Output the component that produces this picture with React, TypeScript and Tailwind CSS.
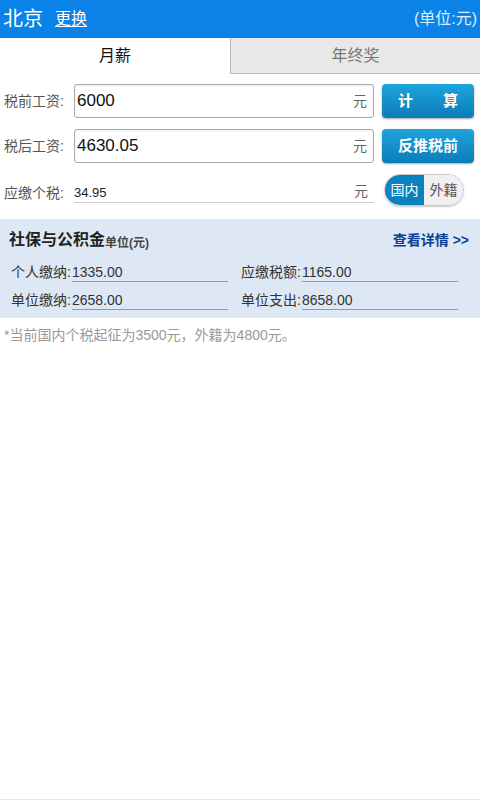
import React, { useState } from 'react';

const font = { fontFamily: '"Liberation Sans", "Noto Sans CJK SC", sans-serif' };

const InputRow: React.FC<{ label: string; value: string; button: React.ReactNode }> = ({ label, value, button }) => (
  <div className="flex items-center h-[34px]">
    <div className="w-[74px] pl-[4px] text-[14px] text-[#555]">{label}</div>
    <div className="flex h-[34px] w-[300px] items-center rounded-[3px] border border-[#a9a9a9] bg-white pl-[2px] pr-[6px] shadow-[inset_0_1px_2px_rgba(0,0,0,0.08)]">
      <span className="flex-1 text-[17px] text-[#111]">{value}</span>
      <span className="text-[14px] text-[#666]">元</span>
    </div>
    <button className="ml-[8px] h-[34px] w-[92px] rounded-[4px] bg-gradient-to-b from-[#1ea4dc] to-[#0a7db8] text-[15px] font-bold text-white shadow-[0_1px_2px_rgba(0,0,0,0.35)]">
      {button}
    </button>
  </div>
);

const Field: React.FC<{ label: string; value: string }> = ({ label, value }) => (
  <div className="flex items-end">
    <span className="text-[14px] leading-[20px] text-[#333]">{label}</span>
    <span className="ml-[1px] w-[156px] border-b border-[#999] text-[14px] leading-[18px] text-[#333]">{value}</span>
  </div>
);

export default function App() {
  const [tab, setTab] = useState(0);
  const [local, setLocal] = useState(true);

  return (
    <div className="flex h-[800px] w-[480px] flex-col border-b border-[#e8e8e2] bg-white" style={font}>
      <div className="flex h-[38px] items-center bg-[#0a82e8] px-[3px] text-white">
        <span className="text-[20px]">北京</span>
        <span className="ml-[12px] text-[16px] underline underline-offset-2">更换</span>
        <span className="ml-auto text-[16px] text-[#dcefff]">(单位:元)</span>
      </div>

      <div className="flex h-[36px]">
        <button onClick={() => setTab(0)} className={tab === 0 ? 'w-[230px] bg-white text-[16px] text-[#111]' : 'w-[230px] bg-white text-[16px] text-[#111]'}>
          月薪
        </button>
        <button
          onClick={() => setTab(1)}
          className="flex-1 border-b border-l border-[#b8b8b8] bg-[#e8e8e8] text-[16px] text-[#777]"
        >
          年终奖
        </button>
      </div>

      <div className="flex flex-col gap-[11px] pt-[10px]">
        <InputRow
          label="税前工资:"
          value="6000"
          button={
            <span className="flex justify-between px-[16px]">
              <span>计</span>
              <span>算</span>
            </span>
          }
        />
        <InputRow label="税后工资:" value="4630.05" button="反推税前" />
        <div className="flex h-[32px] items-center">
          <div className="w-[74px] pl-[4px] pt-[6px] text-[14px] text-[#555]">应缴个税:</div>
          <div className="flex w-[300px] items-end border-b border-[#ccc] pr-[6px] pt-[4px]">
            <span className="flex-1 text-[13px] text-[#222]">34.95</span>
            <span className="text-[14px] text-[#666]">元</span>
          </div>
          <div className="ml-[10px] flex h-[32px] w-[80px] overflow-hidden rounded-full border border-[#c8c8c8] text-[14px] shadow-[0_1px_2px_rgba(0,0,0,0.2)]">
            <button
              onClick={() => setLocal(true)}
              className={local ? 'w-[39px] bg-[#0a82c0] text-white' : 'w-[39px] bg-[#f0f0f0] text-[#555]'}
            >
              国内
            </button>
            <button
              onClick={() => setLocal(false)}
              className={!local ? 'flex-1 bg-[#0a82c0] text-white' : 'flex-1 bg-[#f0f0f0] text-[#555]'}
            >
              外籍
            </button>
          </div>
        </div>
      </div>

      <div className="mt-[13px] bg-[#dee8f5] px-[9px] pb-[8px] pt-[9px]">
        <div className="flex items-center justify-between">
          <div className="flex items-end">
            <span className="text-[16px] font-bold text-[#222]">社保与公积金</span>
            <span className="text-[12px] font-bold text-[#444]">单位(元)</span>
          </div>
          <span className="mr-[2px] text-[14px] font-bold text-[#0d3f96]">查看详情 &gt;&gt;</span>
        </div>
        <div className="mt-[10px] grid grid-cols-[230px_1fr] gap-y-[8px] pl-[2px]">
          <Field label="个人缴纳:" value="1335.00" />
          <Field label="应缴税额:" value="1165.00" />
          <Field label="单位缴纳:" value="2658.00" />
          <Field label="单位支出:" value="8658.00" />
        </div>
      </div>

      <div className="pl-[4px] pt-[7px] text-[14px] text-[#999]">*当前国内个税起征为3500元，外籍为4800元。</div>
    </div>
  );
}
